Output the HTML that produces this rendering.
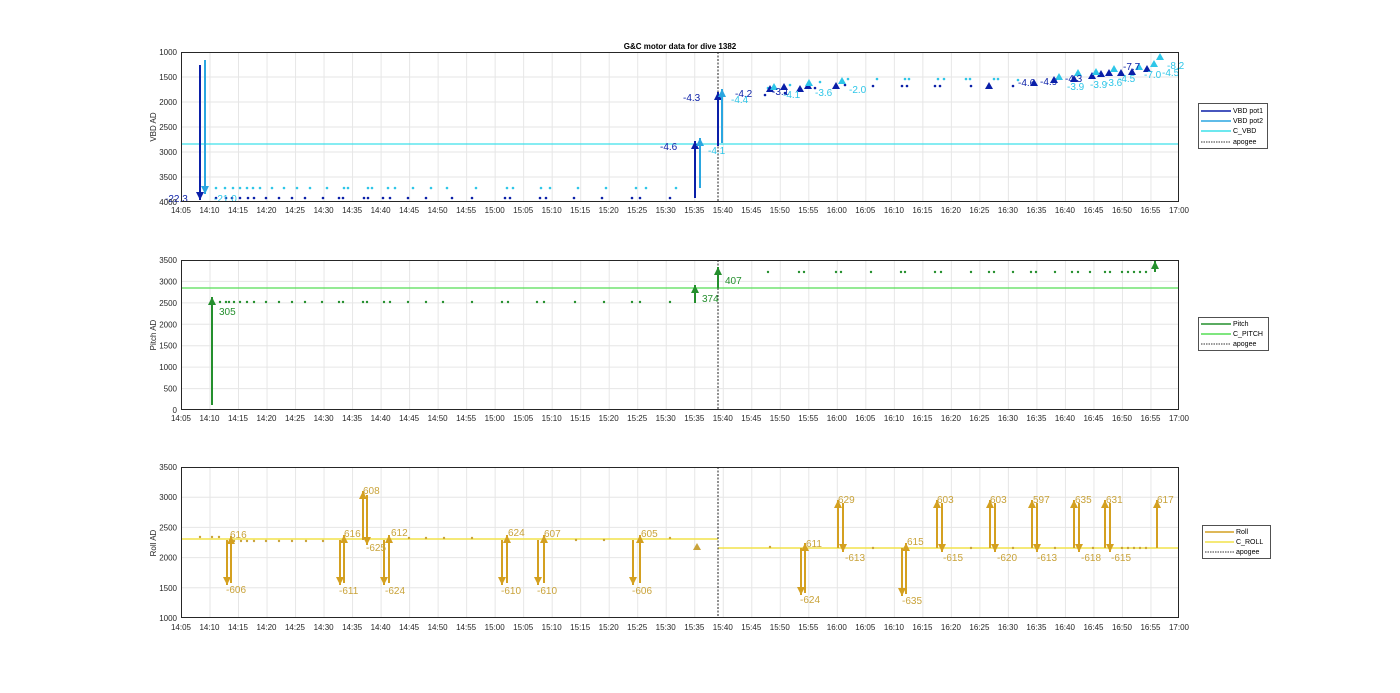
<!DOCTYPE html>
<html><head><meta charset="utf-8"><style>
html,body{margin:0;padding:0;background:#fff;}
svg{display:block;font-family:"Liberation Sans",sans-serif;}
.tk{font-size:8px;fill:#262626;}
.yl{font-size:8px;fill:#262626;}
</style></head><body>
<svg width="1400" height="693" viewBox="0 0 1400 693" xmlns="http://www.w3.org/2000/svg">
<defs>
<pattern id="vg" x="181" y="0" width="28.514" height="700" patternUnits="userSpaceOnUse"><line x1="0.5" y1="0" x2="0.5" y2="700" stroke="#e6e6e6" stroke-width="1"/></pattern>
<marker id="mb1" markerUnits="userSpaceOnUse" markerWidth="10" markerHeight="10" refX="8" refY="4" orient="auto"><path d="M0,0 L8,4 L0,8z" fill="#0a1fa8"/></marker>
<marker id="mb2" markerUnits="userSpaceOnUse" markerWidth="10" markerHeight="10" refX="8" refY="4" orient="auto"><path d="M0,0 L8,4 L0,8z" fill="#2aa6e0"/></marker>
<marker id="mg" markerUnits="userSpaceOnUse" markerWidth="10" markerHeight="10" refX="8" refY="4" orient="auto"><path d="M0,0 L8,4 L0,8z" fill="#248f2d"/></marker>
<marker id="my" markerUnits="userSpaceOnUse" markerWidth="10" markerHeight="10" refX="8" refY="4" orient="auto"><path d="M0,0 L8,4 L0,8z" fill="#d4a020"/></marker>
</defs>
<text x="680" y="49" text-anchor="middle" style="font-size:8px;font-weight:bold" fill="#000">G&amp;C motor data for dive 1382</text>

<!-- ===== AXES 1 ===== -->
<rect x="181" y="52" width="998" height="150" fill="url(#vg)"/>
<g stroke="#e6e6e6"><line x1="181" y1="77" x2="1179" y2="77"/><line x1="181" y1="102" x2="1179" y2="102"/><line x1="181" y1="127" x2="1179" y2="127"/><line x1="181" y1="152" x2="1179" y2="152"/><line x1="181" y1="177" x2="1179" y2="177"/></g>
<line x1="181" y1="144" x2="1179" y2="144" stroke="#3de0ea" stroke-width="1.3"/>
<line x1="718" y1="52" x2="718" y2="202" stroke="#222" stroke-dasharray="2,1.5"/>
<!-- dots -->
<g fill="#0a1fa8">
<circle cx="216" cy="198" r="1.3"/><circle cx="226" cy="198" r="1.3"/><circle cx="232" cy="198" r="1.3"/><circle cx="240" cy="198" r="1.3"/><circle cx="248" cy="198" r="1.3"/><circle cx="254" cy="198" r="1.3"/><circle cx="266" cy="198" r="1.3"/><circle cx="279" cy="198" r="1.3"/><circle cx="292" cy="198" r="1.3"/><circle cx="305" cy="198" r="1.3"/><circle cx="323" cy="198" r="1.3"/><circle cx="339" cy="198" r="1.3"/><circle cx="343" cy="198" r="1.3"/><circle cx="364" cy="198" r="1.3"/><circle cx="368" cy="198" r="1.3"/><circle cx="383" cy="198" r="1.3"/><circle cx="390" cy="198" r="1.3"/><circle cx="408" cy="198" r="1.3"/><circle cx="426" cy="198" r="1.3"/><circle cx="452" cy="198" r="1.3"/><circle cx="472" cy="198" r="1.3"/><circle cx="505" cy="198" r="1.3"/><circle cx="510" cy="198" r="1.3"/><circle cx="540" cy="198" r="1.3"/><circle cx="546" cy="198" r="1.3"/><circle cx="574" cy="198" r="1.3"/><circle cx="602" cy="198" r="1.3"/><circle cx="632" cy="198" r="1.3"/><circle cx="640" cy="198" r="1.3"/><circle cx="670" cy="198" r="1.3"/>
<circle cx="765" cy="95" r="1.3"/><circle cx="785" cy="93" r="1.3"/><circle cx="815" cy="88" r="1.3"/><circle cx="845" cy="85" r="1.3"/><circle cx="873" cy="86" r="1.3"/><circle cx="902" cy="86" r="1.3"/><circle cx="907" cy="86" r="1.3"/><circle cx="935" cy="86" r="1.3"/><circle cx="940" cy="86" r="1.3"/><circle cx="971" cy="86" r="1.3"/><circle cx="1013" cy="86" r="1.3"/>
</g>
<g fill="#2ec6e8">
<circle cx="216" cy="188" r="1.3"/><circle cx="225" cy="188" r="1.3"/><circle cx="233" cy="188" r="1.3"/><circle cx="240" cy="188" r="1.3"/><circle cx="247" cy="188" r="1.3"/><circle cx="253" cy="188" r="1.3"/><circle cx="260" cy="188" r="1.3"/><circle cx="272" cy="188" r="1.3"/><circle cx="284" cy="188" r="1.3"/><circle cx="297" cy="188" r="1.3"/><circle cx="310" cy="188" r="1.3"/><circle cx="327" cy="188" r="1.3"/><circle cx="344" cy="188" r="1.3"/><circle cx="348" cy="188" r="1.3"/><circle cx="368" cy="188" r="1.3"/><circle cx="372" cy="188" r="1.3"/><circle cx="388" cy="188" r="1.3"/><circle cx="395" cy="188" r="1.3"/><circle cx="413" cy="188" r="1.3"/><circle cx="431" cy="188" r="1.3"/><circle cx="447" cy="188" r="1.3"/><circle cx="476" cy="188" r="1.3"/><circle cx="507" cy="188" r="1.3"/><circle cx="513" cy="188" r="1.3"/><circle cx="541" cy="188" r="1.3"/><circle cx="550" cy="188" r="1.3"/><circle cx="578" cy="188" r="1.3"/><circle cx="606" cy="188" r="1.3"/><circle cx="636" cy="188" r="1.3"/><circle cx="646" cy="188" r="1.3"/><circle cx="676" cy="188" r="1.3"/>
<circle cx="768" cy="88" r="1.3"/><circle cx="790" cy="85" r="1.3"/><circle cx="820" cy="82" r="1.3"/><circle cx="848" cy="79" r="1.3"/><circle cx="877" cy="79" r="1.3"/><circle cx="905" cy="79" r="1.3"/><circle cx="909" cy="79" r="1.3"/><circle cx="938" cy="79" r="1.3"/><circle cx="944" cy="79" r="1.3"/><circle cx="966" cy="79" r="1.3"/><circle cx="970" cy="79" r="1.3"/><circle cx="994" cy="79" r="1.3"/><circle cx="998" cy="79" r="1.3"/><circle cx="1018" cy="80" r="1.3"/>
</g>
<!-- arrows -->
<line x1="200" y1="65" x2="200" y2="200" stroke="#0a1fa8" stroke-width="2" marker-end="url(#mb1)"/>
<line x1="205" y1="60" x2="205" y2="194" stroke="#2aa6e0" stroke-width="2" marker-end="url(#mb2)"/>
<line x1="695" y1="198" x2="695" y2="141" stroke="#0a1fa8" stroke-width="2" marker-end="url(#mb1)"/>
<line x1="700" y1="188" x2="700" y2="138" stroke="#2aa6e0" stroke-width="2" marker-end="url(#mb2)"/>
<line x1="718" y1="146" x2="718" y2="92" stroke="#0a1fa8" stroke-width="2" marker-end="url(#mb1)"/>
<line x1="722" y1="143" x2="722" y2="89" stroke="#2aa6e0" stroke-width="2" marker-end="url(#mb2)"/>
<g fill="#0a1fa8">
<path d="M766,92 l4,-7 l4,7z"/><path d="M780,90 l4,-7 l4,7z"/><path d="M796,92 l4,-7 l4,7z"/><path d="M804,89 l4,-7 l4,7z"/><path d="M832,89 l4,-7 l4,7z"/><path d="M985,89 l4,-7 l4,7z"/><path d="M1030,86 l4,-7 l4,7z"/><path d="M1050,83 l4,-7 l4,7z"/><path d="M1070,82 l4,-7 l4,7z"/><path d="M1088,79 l4,-7 l4,7z"/><path d="M1097,77 l4,-7 l4,7z"/><path d="M1105,76 l4,-7 l4,7z"/><path d="M1117,76 l4,-7 l4,7z"/><path d="M1128,75 l4,-7 l4,7z"/><path d="M1143,72 l4,-7 l4,7z"/>
</g>
<g fill="#2ec6e8">
<path d="M770,90 l4,-7 l4,7z"/><path d="M805,86 l4,-7 l4,7z"/><path d="M838,84 l4,-7 l4,7z"/><path d="M1055,80 l4,-7 l4,7z"/><path d="M1074,76 l4,-7 l4,7z"/><path d="M1092,75 l4,-7 l4,7z"/><path d="M1110,72 l4,-7 l4,7z"/><path d="M1135,70 l4,-7 l4,7z"/><path d="M1150,67 l4,-7 l4,7z"/><path d="M1156,60 l4,-7 l4,7z"/>
</g>
<g style="font-size:10px" fill="#0a1fa8">
<text x="165" y="202">-22.3</text><text x="683" y="101">-4.3</text><text x="660" y="150">-4.6</text><text x="735" y="97">-4.2</text><text x="772" y="95">-3.1</text><text x="1018" y="86">-4.6</text><text x="1040" y="85">-4.9</text><text x="1065" y="82">-4.3</text><text x="1123" y="70">-7.7</text>
</g>
<g style="font-size:10px" fill="#2ec6e8">
<text x="214" y="202">-21.0</text><text x="708" y="154">-4.1</text><text x="731" y="103">-4.4</text><text x="783" y="98">-4.1</text><text x="815" y="96">-3.6</text><text x="849" y="93">-2.0</text><text x="1067" y="90">-3.9</text><text x="1090" y="88">-3.9</text><text x="1105" y="86">-3.6</text><text x="1118" y="82">-4.5</text><text x="1144" y="78">-7.0</text><text x="1162" y="76">-4.5</text><text x="1167" y="69">-8.2</text>
</g>
<rect x="181.5" y="52.5" width="997" height="149" fill="none" stroke="#262626" stroke-width="1"/>
<g class="yl" text-anchor="end"><text x="177" y="55">1000</text><text x="177" y="80">1500</text><text x="177" y="105">2000</text><text x="177" y="130">2500</text><text x="177" y="155">3000</text><text x="177" y="180">3500</text><text x="177" y="205">4000</text></g>
<text transform="translate(156,127) rotate(-90)" text-anchor="middle" style="font-size:8px" fill="#262626">VBD AD</text>
<g class="tk" text-anchor="middle" transform="translate(0,213)">
<text x="181">14:05</text><text x="209.5">14:10</text><text x="238">14:15</text><text x="266.5">14:20</text><text x="295">14:25</text><text x="323.6">14:30</text><text x="352.1">14:35</text><text x="380.6">14:40</text><text x="409.1">14:45</text><text x="437.6">14:50</text><text x="466.1">14:55</text><text x="494.7">15:00</text><text x="523.2">15:05</text><text x="551.7">15:10</text><text x="580.2">15:15</text><text x="608.7">15:20</text><text x="637.2">15:25</text><text x="665.7">15:30</text><text x="694.3">15:35</text><text x="722.8">15:40</text><text x="751.3">15:45</text><text x="779.8">15:50</text><text x="808.3">15:55</text><text x="836.8">16:00</text><text x="865.3">16:05</text><text x="893.9">16:10</text><text x="922.4">16:15</text><text x="950.9">16:20</text><text x="979.4">16:25</text><text x="1007.9">16:30</text><text x="1036.4">16:35</text><text x="1064.9">16:40</text><text x="1093.5">16:45</text><text x="1122">16:50</text><text x="1150.5">16:55</text><text x="1179">17:00</text>
</g>
<!-- legend 1 -->
<rect x="1198.5" y="103.5" width="69" height="45" fill="#fff" stroke="#262626" stroke-width="0.8"/>
<g style="font-size:7px" fill="#000">
<line x1="1201" y1="111" x2="1231" y2="111" stroke="#0a1fa8" stroke-width="1.5"/><text x="1233" y="113">VBD pot1</text>
<line x1="1201" y1="121" x2="1231" y2="121" stroke="#2aa6e0" stroke-width="1.5"/><text x="1233" y="123">VBD pot2</text>
<line x1="1201" y1="131" x2="1231" y2="131" stroke="#3de0ea" stroke-width="1.5"/><text x="1233" y="133">C_VBD</text>
<line x1="1201" y1="142" x2="1231" y2="142" stroke="#333" stroke-dasharray="1.5,1"/><text x="1233" y="144">apogee</text>
</g>

<!-- ===== AXES 2 ===== -->
<rect x="181" y="260" width="998" height="150" fill="url(#vg)"/>
<g stroke="#e6e6e6"><line x1="181" y1="281.4" x2="1179" y2="281.4"/><line x1="181" y1="302.9" x2="1179" y2="302.9"/><line x1="181" y1="324.3" x2="1179" y2="324.3"/><line x1="181" y1="345.7" x2="1179" y2="345.7"/><line x1="181" y1="367.1" x2="1179" y2="367.1"/><line x1="181" y1="388.6" x2="1179" y2="388.6"/></g>
<line x1="181" y1="288" x2="1179" y2="288" stroke="#55dd55" stroke-width="1.3"/>
<line x1="718" y1="260" x2="718" y2="410" stroke="#222" stroke-dasharray="2,1.5"/>
<g fill="#248f2d">
<circle cx="220" cy="302" r="1.2"/><circle cx="226" cy="302" r="1.2"/><circle cx="229" cy="302" r="1.2"/><circle cx="234" cy="302" r="1.2"/><circle cx="240" cy="302" r="1.2"/><circle cx="247" cy="302" r="1.2"/><circle cx="254" cy="302" r="1.2"/><circle cx="266" cy="302" r="1.2"/><circle cx="279" cy="302" r="1.2"/><circle cx="292" cy="302" r="1.2"/><circle cx="305" cy="302" r="1.2"/><circle cx="322" cy="302" r="1.2"/><circle cx="339" cy="302" r="1.2"/><circle cx="343" cy="302" r="1.2"/><circle cx="363" cy="302" r="1.2"/><circle cx="367" cy="302" r="1.2"/><circle cx="384" cy="302" r="1.2"/><circle cx="390" cy="302" r="1.2"/><circle cx="408" cy="302" r="1.2"/><circle cx="426" cy="302" r="1.2"/><circle cx="443" cy="302" r="1.2"/><circle cx="472" cy="302" r="1.2"/><circle cx="502" cy="302" r="1.2"/><circle cx="508" cy="302" r="1.2"/><circle cx="537" cy="302" r="1.2"/><circle cx="544" cy="302" r="1.2"/><circle cx="575" cy="302" r="1.2"/><circle cx="604" cy="302" r="1.2"/><circle cx="632" cy="302" r="1.2"/><circle cx="640" cy="302" r="1.2"/><circle cx="670" cy="302" r="1.2"/>
<circle cx="768" cy="272" r="1.2"/><circle cx="799" cy="272" r="1.2"/><circle cx="804" cy="272" r="1.2"/><circle cx="836" cy="272" r="1.2"/><circle cx="841" cy="272" r="1.2"/><circle cx="871" cy="272" r="1.2"/><circle cx="901" cy="272" r="1.2"/><circle cx="905" cy="272" r="1.2"/><circle cx="935" cy="272" r="1.2"/><circle cx="941" cy="272" r="1.2"/><circle cx="971" cy="272" r="1.2"/><circle cx="989" cy="272" r="1.2"/><circle cx="994" cy="272" r="1.2"/><circle cx="1013" cy="272" r="1.2"/><circle cx="1031" cy="272" r="1.2"/><circle cx="1036" cy="272" r="1.2"/><circle cx="1055" cy="272" r="1.2"/><circle cx="1072" cy="272" r="1.2"/><circle cx="1078" cy="272" r="1.2"/><circle cx="1090" cy="272" r="1.2"/><circle cx="1105" cy="272" r="1.2"/><circle cx="1110" cy="272" r="1.2"/><circle cx="1122" cy="272" r="1.2"/><circle cx="1128" cy="272" r="1.2"/><circle cx="1134" cy="272" r="1.2"/><circle cx="1140" cy="272" r="1.2"/><circle cx="1146" cy="272" r="1.2"/>
</g>
<line x1="212" y1="405" x2="212" y2="297" stroke="#248f2d" stroke-width="2" marker-end="url(#mg)"/>
<line x1="695" y1="303" x2="695" y2="285" stroke="#248f2d" stroke-width="2" marker-end="url(#mg)"/>
<line x1="718" y1="288" x2="718" y2="267" stroke="#248f2d" stroke-width="2" marker-end="url(#mg)"/>
<line x1="1155" y1="272" x2="1155" y2="261" stroke="#248f2d" stroke-width="2" marker-end="url(#mg)"/>
<g style="font-size:10px" fill="#248f2d"><text x="219" y="315">305</text><text x="702" y="302">374</text><text x="725" y="284">407</text></g>
<rect x="181.5" y="260.5" width="997" height="149" fill="none" stroke="#262626"/>
<g class="yl" text-anchor="end"><text x="177" y="263">3500</text><text x="177" y="284.4">3000</text><text x="177" y="305.9">2500</text><text x="177" y="327.3">2000</text><text x="177" y="348.7">1500</text><text x="177" y="370.1">1000</text><text x="177" y="391.6">500</text><text x="177" y="413">0</text></g>
<text transform="translate(156,335) rotate(-90)" text-anchor="middle" style="font-size:8px" fill="#262626">Pitch AD</text>
<g class="tk" text-anchor="middle" transform="translate(0,421)">
<text x="181">14:05</text><text x="209.5">14:10</text><text x="238">14:15</text><text x="266.5">14:20</text><text x="295">14:25</text><text x="323.6">14:30</text><text x="352.1">14:35</text><text x="380.6">14:40</text><text x="409.1">14:45</text><text x="437.6">14:50</text><text x="466.1">14:55</text><text x="494.7">15:00</text><text x="523.2">15:05</text><text x="551.7">15:10</text><text x="580.2">15:15</text><text x="608.7">15:20</text><text x="637.2">15:25</text><text x="665.7">15:30</text><text x="694.3">15:35</text><text x="722.8">15:40</text><text x="751.3">15:45</text><text x="779.8">15:50</text><text x="808.3">15:55</text><text x="836.8">16:00</text><text x="865.3">16:05</text><text x="893.9">16:10</text><text x="922.4">16:15</text><text x="950.9">16:20</text><text x="979.4">16:25</text><text x="1007.9">16:30</text><text x="1036.4">16:35</text><text x="1064.9">16:40</text><text x="1093.5">16:45</text><text x="1122">16:50</text><text x="1150.5">16:55</text><text x="1179">17:00</text>
</g>
<rect x="1198.5" y="317.5" width="70" height="33" fill="#fff" stroke="#262626" stroke-width="0.8"/>
<g style="font-size:7px" fill="#000">
<line x1="1201" y1="324" x2="1231" y2="324" stroke="#248f2d" stroke-width="1.5"/><text x="1233" y="326">Pitch</text>
<line x1="1201" y1="334" x2="1231" y2="334" stroke="#55dd55" stroke-width="1.5"/><text x="1233" y="336">C_PITCH</text>
<line x1="1201" y1="344" x2="1231" y2="344" stroke="#333" stroke-dasharray="1.5,1"/><text x="1233" y="346">apogee</text>
</g>

<!-- ===== AXES 3 ===== -->
<rect x="181" y="467" width="998" height="151" fill="url(#vg)"/>
<g stroke="#e6e6e6"><line x1="181" y1="497.2" x2="1179" y2="497.2"/><line x1="181" y1="527.4" x2="1179" y2="527.4"/><line x1="181" y1="557.6" x2="1179" y2="557.6"/><line x1="181" y1="587.8" x2="1179" y2="587.8"/></g>
<line x1="181" y1="539" x2="718" y2="539" stroke="#f2e24a" stroke-width="1.5"/>
<line x1="718" y1="548" x2="1179" y2="548" stroke="#f2e24a" stroke-width="1.5"/>
<line x1="718" y1="467" x2="718" y2="618" stroke="#222" stroke-dasharray="2,1.5"/>
<g fill="#c9a33a">
<circle cx="200" cy="537" r="1.2"/><circle cx="212" cy="537" r="1.2"/><circle cx="219" cy="537" r="1.2"/><circle cx="234" cy="541" r="1.2"/><circle cx="241" cy="541" r="1.2"/><circle cx="247" cy="541" r="1.2"/><circle cx="254" cy="541" r="1.2"/><circle cx="266" cy="541" r="1.2"/><circle cx="279" cy="541" r="1.2"/><circle cx="292" cy="541" r="1.2"/><circle cx="306" cy="541" r="1.2"/><circle cx="323" cy="541" r="1.2"/><circle cx="409" cy="538" r="1.2"/><circle cx="426" cy="538" r="1.2"/><circle cx="444" cy="538" r="1.2"/><circle cx="472" cy="538" r="1.2"/><circle cx="576" cy="540" r="1.2"/><circle cx="604" cy="540" r="1.2"/><circle cx="670" cy="538" r="1.2"/>
<circle cx="770" cy="547" r="1.2"/><circle cx="873" cy="548" r="1.2"/><circle cx="971" cy="548" r="1.2"/><circle cx="1013" cy="548" r="1.2"/><circle cx="1055" cy="548" r="1.2"/><circle cx="1093" cy="548" r="1.2"/><circle cx="1122" cy="548" r="1.2"/><circle cx="1128" cy="548" r="1.2"/><circle cx="1134" cy="548" r="1.2"/><circle cx="1140" cy="548" r="1.2"/><circle cx="1146" cy="548" r="1.2"/>
<path d="M693,550 l4,-7 l4,7z"/>
</g>
<g stroke="#d4a020" stroke-width="2">
<line x1="227" y1="540" x2="227" y2="585" marker-end="url(#my)"/><line x1="231" y1="583" x2="231" y2="536" marker-end="url(#my)"/>
<line x1="340" y1="540" x2="340" y2="585" marker-end="url(#my)"/><line x1="344" y1="583" x2="344" y2="535" marker-end="url(#my)"/>
<line x1="363" y1="540" x2="363" y2="491" marker-end="url(#my)"/><line x1="367" y1="495" x2="367" y2="545" marker-end="url(#my)"/>
<line x1="384" y1="540" x2="384" y2="585" marker-end="url(#my)"/><line x1="389" y1="583" x2="389" y2="535" marker-end="url(#my)"/>
<line x1="502" y1="540" x2="502" y2="585" marker-end="url(#my)"/><line x1="507" y1="583" x2="507" y2="535" marker-end="url(#my)"/>
<line x1="538" y1="540" x2="538" y2="585" marker-end="url(#my)"/><line x1="544" y1="583" x2="544" y2="535" marker-end="url(#my)"/>
<line x1="633" y1="540" x2="633" y2="585" marker-end="url(#my)"/><line x1="640" y1="583" x2="640" y2="535" marker-end="url(#my)"/>
<line x1="801" y1="548" x2="801" y2="595" marker-end="url(#my)"/><line x1="805" y1="593" x2="805" y2="543" marker-end="url(#my)"/>
<line x1="838" y1="548" x2="838" y2="500" marker-end="url(#my)"/><line x1="843" y1="503" x2="843" y2="552" marker-end="url(#my)"/>
<line x1="902" y1="548" x2="902" y2="596" marker-end="url(#my)"/><line x1="906" y1="594" x2="906" y2="543" marker-end="url(#my)"/>
<line x1="937" y1="548" x2="937" y2="500" marker-end="url(#my)"/><line x1="942" y1="503" x2="942" y2="552" marker-end="url(#my)"/>
<line x1="990" y1="548" x2="990" y2="500" marker-end="url(#my)"/><line x1="995" y1="503" x2="995" y2="552" marker-end="url(#my)"/>
<line x1="1032" y1="548" x2="1032" y2="500" marker-end="url(#my)"/><line x1="1037" y1="503" x2="1037" y2="552" marker-end="url(#my)"/>
<line x1="1074" y1="548" x2="1074" y2="500" marker-end="url(#my)"/><line x1="1079" y1="503" x2="1079" y2="552" marker-end="url(#my)"/>
<line x1="1105" y1="548" x2="1105" y2="500" marker-end="url(#my)"/><line x1="1110" y1="503" x2="1110" y2="552" marker-end="url(#my)"/>
<line x1="1157" y1="548" x2="1157" y2="500" marker-end="url(#my)"/>
</g>
<g style="font-size:10px" fill="#c9a33a">
<text x="230" y="538">616</text><text x="226" y="593">-606</text>
<text x="344" y="537">616</text><text x="339" y="594">-611</text>
<text x="363" y="494">608</text><text x="366" y="551">-625</text>
<text x="391" y="536">612</text><text x="385" y="594">-624</text>
<text x="508" y="536">624</text><text x="501" y="594">-610</text>
<text x="544" y="537">607</text><text x="537" y="594">-610</text>
<text x="641" y="537">605</text><text x="632" y="594">-606</text>
<text x="806" y="547">611</text><text x="800" y="603">-624</text>
<text x="838" y="503">629</text><text x="845" y="561">-613</text>
<text x="907" y="545">615</text><text x="902" y="604">-635</text>
<text x="937" y="503">603</text><text x="943" y="561">-615</text>
<text x="990" y="503">603</text><text x="997" y="561">-620</text>
<text x="1033" y="503">597</text><text x="1037" y="561">-613</text>
<text x="1075" y="503">635</text><text x="1081" y="561">-618</text>
<text x="1106" y="503">631</text><text x="1111" y="561">-615</text>
<text x="1157" y="503">617</text>
</g>
<rect x="181.5" y="467.5" width="997" height="150" fill="none" stroke="#262626"/>
<g class="yl" text-anchor="end"><text x="177" y="470">3500</text><text x="177" y="500.2">3000</text><text x="177" y="530.4">2500</text><text x="177" y="560.6">2000</text><text x="177" y="590.8">1500</text><text x="177" y="621">1000</text></g>
<text transform="translate(156,543) rotate(-90)" text-anchor="middle" style="font-size:8px" fill="#262626">Roll AD</text>
<g class="tk" text-anchor="middle" transform="translate(0,630)">
<text x="181">14:05</text><text x="209.5">14:10</text><text x="238">14:15</text><text x="266.5">14:20</text><text x="295">14:25</text><text x="323.6">14:30</text><text x="352.1">14:35</text><text x="380.6">14:40</text><text x="409.1">14:45</text><text x="437.6">14:50</text><text x="466.1">14:55</text><text x="494.7">15:00</text><text x="523.2">15:05</text><text x="551.7">15:10</text><text x="580.2">15:15</text><text x="608.7">15:20</text><text x="637.2">15:25</text><text x="665.7">15:30</text><text x="694.3">15:35</text><text x="722.8">15:40</text><text x="751.3">15:45</text><text x="779.8">15:50</text><text x="808.3">15:55</text><text x="836.8">16:00</text><text x="865.3">16:05</text><text x="893.9">16:10</text><text x="922.4">16:15</text><text x="950.9">16:20</text><text x="979.4">16:25</text><text x="1007.9">16:30</text><text x="1036.4">16:35</text><text x="1064.9">16:40</text><text x="1093.5">16:45</text><text x="1122">16:50</text><text x="1150.5">16:55</text><text x="1179">17:00</text>
</g>
<rect x="1202.5" y="525.5" width="68" height="33" fill="#fff" stroke="#262626" stroke-width="0.8"/>
<g style="font-size:7px" fill="#000">
<line x1="1205" y1="532" x2="1234" y2="532" stroke="#d4a020" stroke-width="1.5"/><text x="1236" y="534">Roll</text>
<line x1="1205" y1="542" x2="1234" y2="542" stroke="#f2e24a" stroke-width="1.5"/><text x="1236" y="544">C_ROLL</text>
<line x1="1205" y1="552" x2="1234" y2="552" stroke="#333" stroke-dasharray="1.5,1"/><text x="1236" y="554">apogee</text>
</g>
</svg>
</body></html>
